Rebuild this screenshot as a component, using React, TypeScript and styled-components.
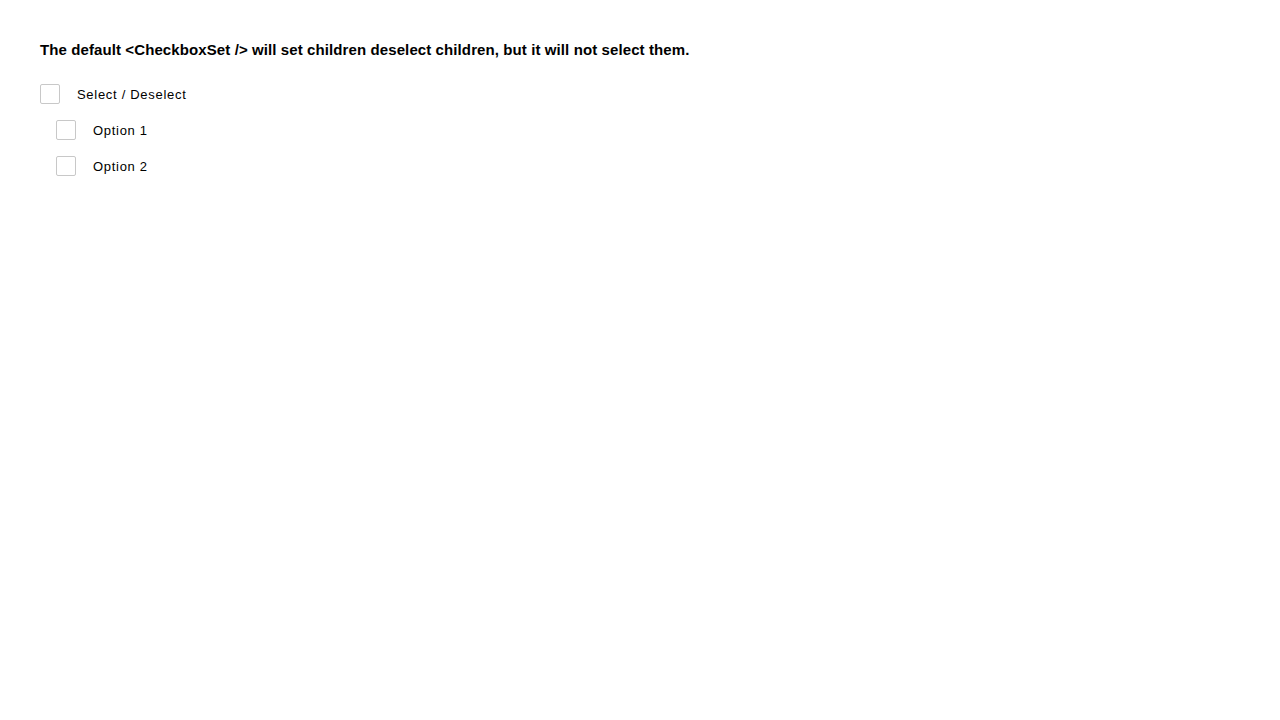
import React from "react";
import styled, { createGlobalStyle } from "styled-components";

const Global = createGlobalStyle`
  html, body { margin: 0; padding: 0; background: #fff; }
  body { font-family: "Liberation Sans", Arial, sans-serif; color: #000; }
`;

const Page = styled.div`
  padding: 40px 40px;
`;

const Title = styled.p`
  margin: 0 0 24px;
  font-size: 15px;
  font-weight: 700;
  line-height: 20px;
  letter-spacing: 0.1px;
`;

const List = styled.div`
  display: flex;
  flex-direction: column;
  gap: 16px;
`;

const Row = styled.label<{ $indent?: boolean }>`
  display: flex;
  align-items: center;
  gap: 17px;
  padding-left: ${(p) => (p.$indent ? "16px" : "0")};
  height: 20px;
  font-size: 13px;
  letter-spacing: 0.7px;
  cursor: pointer;
`;

const Box = styled.span`
  box-sizing: border-box;
  width: 20px;
  height: 20px;
  border: 1px solid #c8c8c8;
  border-radius: 2px;
  background: #fff;
  flex-shrink: 0;
`;

export default function App() {
  return (
    <Page>
      <Global />
      <Title>
        The default &lt;CheckboxSet /&gt; will set children deselect children, but it will not select them.
      </Title>
      <List>
        <Row>
          <Box />
          Select / Deselect
        </Row>
        <Row $indent>
          <Box />
          Option 1
        </Row>
        <Row $indent>
          <Box />
          Option 2
        </Row>
      </List>
    </Page>
  );
}
